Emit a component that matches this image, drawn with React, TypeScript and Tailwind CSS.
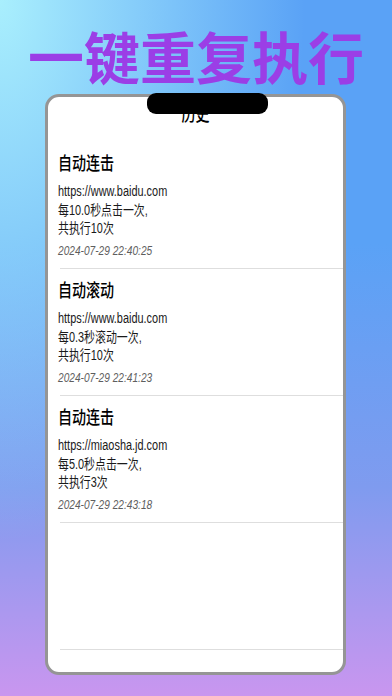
const records = [
  {
    title: "自动连击",
    url: "https://www.baidu.com",
    rule: "每10.0秒点击一次,",
    count: "共执行10次",
    time: "2024-07-29 22:40:25",
  },
  {
    title: "自动滚动",
    url: "https://www.baidu.com",
    rule: "每0.3秒滚动一次,",
    count: "共执行10次",
    time: "2024-07-29 22:41:23",
  },
  {
    title: "自动连击",
    url: "https://miaosha.jd.com",
    rule: "每5.0秒点击一次,",
    count: "共执行3次",
    time: "2024-07-29 22:43:18",
  },
]

const Row = ({ r }: { r: (typeof records)[number] }) => {
  return (
    <div className="ml-[12px] border-b border-[#dedede] h-[127px]">
      <div className="-ml-[2px] origin-left scale-x-[0.78] pt-[10px]">
        <div className="text-[18px] leading-[24px] font-medium text-black">{r.title}</div>
        <div className="mt-[6px] text-[14px] leading-[18.5px] text-[#1a1a1a]">
          <div>{r.url}</div>
          <div>{r.rule}</div>
          <div>{r.count}</div>
        </div>
        <div className="mt-[4.5px] text-[13px] leading-[18px] italic text-[#5e5e5e]">{r.time}</div>
      </div>
    </div>
  )
}

export default function App() {
  return (
    <div className="w-[392px] h-[696px] overflow-hidden font-['Liberation_Sans','Noto_Sans_CJK_SC',sans-serif] bg-[radial-gradient(ellipse_at_0%_0%,#a9effd_0%,rgba(169,239,253,0)_55%),linear-gradient(to_bottom,#5aa2f6_35%,#7f9bef_70%,#c996ef_100%)]">
      {/* headline */}
      <div className="pt-[27px] text-center text-[56px] leading-[56px] font-bold text-[#9b3ee6] font-['Noto_Sans_CJK_SC',sans-serif] whitespace-nowrap">
        一键重复执行
      </div>

      {/* phone frame */}
      <div className="relative mt-[11px] ml-[45px] w-[301px] h-[581px] rounded-[14px] border-[3px] border-[#959595] bg-white">
        <div className="absolute -top-[4px] left-[99px] w-[121px] h-[21px] rounded-[9px] bg-black z-10" />

        <div className="h-[45px] pt-[6px] text-center">
          <div className="scale-x-[0.78] text-[18px] leading-[24px] font-medium text-black">历史</div>
        </div>

        {records.map((r, i) => (
          <Row key={i} r={r} />
        ))}
        <div className="ml-[12px] border-b border-[#dedede] h-[127px]" />
      </div>
    </div>
  )
}
